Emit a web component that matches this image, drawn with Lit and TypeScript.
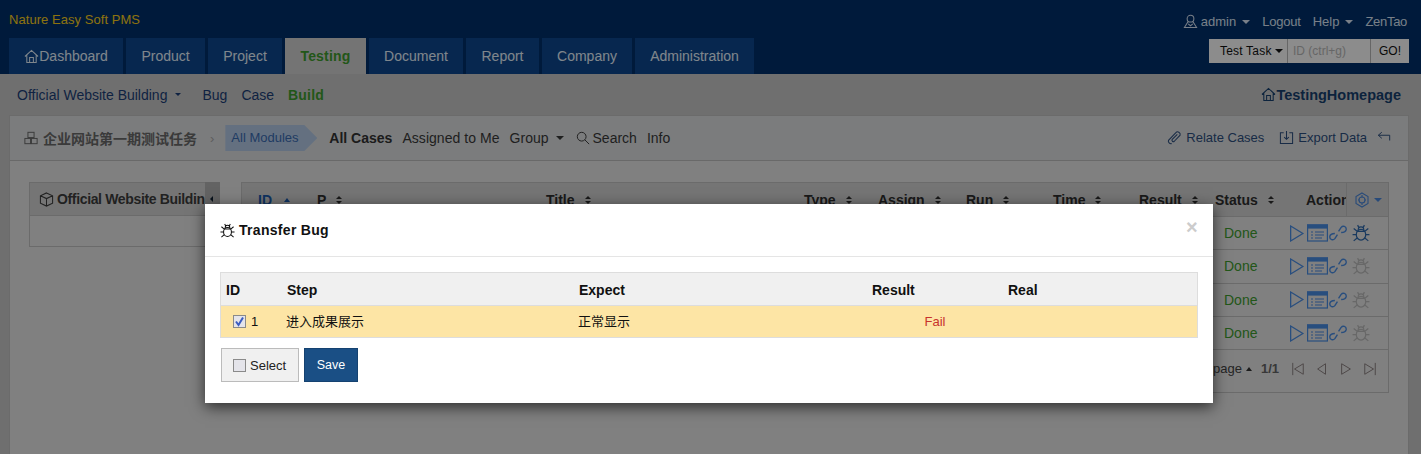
import { LitElement, html, css, svg } from "lit";
import { customElement } from "lit/decorators.js";

const ic = (w: number, body: unknown, cls = "") => html`<svg class="ic ${cls}" width=${w} height=${w} viewBox="0 0 16 16" fill="none" stroke="currentColor" stroke-width="1.1">${body}</svg>`;
const home = (w = 16) => ic(w, svg`<path d="M1 8 8 1.5 15 8M3 6.5V14.5H13V6.5M6 14.5V9H10V14.5"/>`);
const user = () => ic(15, svg`<circle cx="8" cy="5" r="3.6"/><path d="M5.5 8 1.5 14.5H14.5L10.5 8M5.5 10.5 8 12.5 10.5 10.5"/>`);
const sitemap = () => ic(14, svg`<rect x="4.5" y="1.5" width="7" height="6"/><rect x="1" y="8.5" width="6.5" height="6"/><rect x="8.5" y="8.5" width="6.5" height="6"/>`);
const cube = () => ic(15, svg`<path d="M8 1 14.5 4V12L8 15 1.5 12V4ZM1.5 4 8 7 14.5 4M8 7V15"/>`);
const link = () => ic(15, svg`<path d="M5 14.5C3 15.2.8 13 1.6 11L9.5 2.8C11 1 14.8 2.5 14 5.5L7.8 12C6.5 13.2 4.4 11.5 5.6 10L11 4.6"/>`);
const exportI = () => ic(15, svg`<path d="M5 3H1.5V14.5H14.5V3H11M8 1V10M5.5 7.5 8 10 10.5 7.5"/>`);
const back = () => ic(14, svg`<path d="M1.5 6H14.5V12M1.5 6 5.5 2.5M1.5 6 5.5 9.5"/>`);
const search = () => ic(14, svg`<circle cx="6.5" cy="6.5" r="5"/><path d="M10 10 15 15"/>`);
const bug = (w = 18, cls = "") => ic(w, svg`<ellipse cx="8" cy="9.5" rx="4.2" ry="4.8"/><path d="M4.5 6.5H11.5M5.5 5.5C5.5 1.5 10.5 1.5 10.5 5.5M4 9.5H.5M12 9.5H15.5M4.6 6.5 1.5 4M11.4 6.5 14.5 4M4.6 12.5 1.5 15M11.4 12.5 14.5 15M5 1 6 3M11 1 10 3"/>`, cls);
const play = () => ic(17, svg`<path d="M2.5 1 14 8 2.5 15Z" stroke-width="1.2"/>`);
const listBox = () => html`<svg class="ic" width="21" height="18" viewBox="0 0 21 18" fill="none" stroke="currentColor" stroke-width="1.2"><rect x=".6" y="1" width="19.8" height="16"/><rect x=".6" y="1" width="19.8" height="3" fill="currentColor"/><path d="M4 8H6M8 8H17M4 11H6M8 11H17M4 14H6M8 14H15"/></svg>`;
const unlink = () => ic(18, svg`<path stroke-width="1.25" d="M8.5 6.5 10.8 3C12.3 1.2 15.5 1.8 15.3 4.8 15 7 13 7.6 10.8 7.6M7.5 9.5 5.2 13C3.7 14.8.5 14.2.7 11.2 1 9 3 8.4 5.2 8.4"/>`);
const gear = () => ic(16, svg`<path d="M8 1 14 4.5V11.5L8 15 2 11.5V4.5Z"/><circle cx="8" cy="8" r="3"/><path d="M8 5.5V3M8 10.5V13M5.5 8H4M10.5 8H12"/>`);
const pagerIcon = (d: string) => ic(14, svg`<path d=${d}/>`);
const sort = () => html`<span class="sort"></span>`;
const checkbox = (on: boolean) => html`<svg class="cb" width="13" height="13" viewBox="0 0 13 13"><rect x=".5" y=".5" width="12" height="12" fill="#e4e4ea" stroke="#8a8a8a"/>${on ? svg`<path d="M3 6.5 5.5 10 10 2.5" fill="none" stroke="#3b5cc0" stroke-width="2"/>` : ""}</svg>`;

const heads = ["ID", "P", "Title", "Type", "Assign", "Run", "Time", "Result", "Status"];

@customElement("app-root")
export class AppRoot extends LitElement {
  static styles = css`
    :host { display: block; position: relative; height: 454px; overflow: hidden; background: #cbcbcb; font: 14px "Liberation Sans", "Noto Sans CJK SC", sans-serif; color: #3d3d3d; }
    .ic { display: block; flex: none; }
    .caret { display: inline-block; border: 4px solid transparent; border-top-color: currentColor; border-bottom: 0; flex: none; }
    header { height: 74px; background: #00306c; display: flex; flex-direction: column; }
    .top { height: 38px; display: flex; justify-content: space-between; padding: 0 14px 0 9px; font-size: 13px; }
    .brand { color: #ffd21a; padding-top: 12px; letter-spacing: .05px; }
    .usernav { display: flex; gap: 12px; padding-top: 14px; color: #dce8f8; height: 15px; align-items: center; }
    .usernav span { display: flex; align-items: center; gap: 3px; }
    .usernav .caret { margin-left: 3px; }
    .usernav .zt { letter-spacing: -.3px; }
    .usernav .lo { letter-spacing: -.2px; }
    .bottom { flex: 1; display: flex; justify-content: space-between; padding: 0 12px 0 9px; }
    .tabs { display: grid; grid-template-columns: 114px 79px 74px 81px 94px 73px 90px 119px; gap: 3px; }
    .tab { height: 36px; display: flex; align-items: center; justify-content: center; background: #0d4890; color: #e8f4ff; }
    .tab.on { background: #d3d3d3; color: #3f9e2e; font-weight: bold; letter-spacing: .2px; }
    .qs { display: flex; height: 24px; margin-top: 1px; font-size: 12px; color: #111; }
    .qs > * { display: flex; align-items: center; box-sizing: border-box; background: #fff; }
    .qsbtn { width: 78px; padding-left: 11px; gap: 2px; letter-spacing: .2px; }
    .qsbtn .caret { margin-left: 1px; }
    .qsin { width: 84px; padding-left: 5px; color: #bbb; border-left: 1px solid #bbb; border-right: 1px solid #bbb; }
    .qsgo { width: 38px; justify-content: center; }
    .sub { height: 41px; display: flex; align-items: center; justify-content: space-between; padding: 0 20px 0 17px; color: #1c3f78; }
    .subl { display: flex; align-items: center; gap: 14px; }
    .subl .prod { display: flex; align-items: center; gap: 8px; margin-right: 7px; }
    .subl .caret { border-width: 3px; }
    .green { color: #3f9e2e; font-weight: bold; letter-spacing: .2px; }
    .subr { display: flex; align-items: center; font-weight: bold; font-size: 14.5px; color: #17406f; }
    .card { margin: 0 12px 0 9px; background: #e9e9e9; height: 400px; box-sizing: border-box; border: 1px solid #c4c4c4; border-width: 1px 1px 0 1px; display: flex; flex-direction: column; }
    .cardh { height: 44px; flex: none; background: #e0e2e4; border-bottom: 1px solid #bfbfbf; display: flex; justify-content: space-between; align-items: center; padding: 0 13px 0 14px; }
    .crumb { display: flex; align-items: center; }
    .task { display: flex; align-items: center; gap: 5px; font-weight: bold; color: #6a6a6a; margin-right: 13px; font-size: 14px; white-space: nowrap; }
    .chev { color: #aaa; margin-right: 11px; font-size: 13px; }
    .mod { width: 92px; height: 26px; line-height: 26px; background: #b7cdea; color: #3a6cb4; box-sizing: border-box; padding-left: 6px; font-size: 13px; clip-path: polygon(0 0, 79px 0, 100% 50%, 79px 100%, 0 100%); margin-right: 12px; }
    .flt { display: flex; align-items: center; gap: 10px; color: #3a3a3a; }
    .flt b { color: #333; }
    .flt span { display: flex; align-items: center; gap: 3px; }
    .flt .am { letter-spacing: .05px; }
    .flt .caret { margin: 0 2px 0 4px; }
    .acts { display: flex; align-items: center; font-size: 13px; color: #2d4f80; margin-top: -2px; }
    .acts .ic { margin-right: 4px; }
    .act-item { display: flex; align-items: center; margin-right: 15px; }
    .act-item.last { margin-right: 10px; }
    .cardb { display: flex; padding: 21px 19px 0; gap: 21px; align-items: flex-start; }
    .side { width: 191px; height: 65px; box-sizing: border-box; border: 1px solid #c4c4c4; flex: none; position: relative; }
    .sideh { height: 32px; background: #d6d6d6; border-bottom: 1px solid #c4c4c4; display: flex; align-items: center; gap: 3px; padding-left: 9px; font-weight: bold; white-space: nowrap; overflow: hidden; color: #3d3d3d; letter-spacing: -.35px; }
    .sidetog { position: absolute; right: -1px; top: -1px; width: 15px; height: 34px; background: #b4b4b4; }
    .sidetog::after { content: ""; position: absolute; left: 5px; top: 14px; border: 3px solid transparent; border-right-color: #123; border-left: 0; }
    .grid { flex: 1; box-sizing: border-box; border: 1px solid #c4c4c4; }
    .cols { display: grid; grid-template-columns: 59px 229px 258px 74px 88px 87px 86px 76px 91px 56px 42px; }
    .rowh { height: 33px; background: #d6d6d6; border-bottom: 1px solid #c4c4c4; font-weight: bold; color: #2f2f2f; align-items: center; }
    .rowh > div { padding-left: 16px; white-space: nowrap; display: flex; align-items: center; gap: 10px; overflow: hidden; }
    .sort { display: inline-block; width: 0; height: 0; border: 3px solid transparent; border-bottom: 3px solid #2f2f2f; position: relative; top: -4px; }
    .sort::after { content: ""; position: absolute; left: -3px; top: 5px; border: 3px solid transparent; border-top: 3px solid #2f2f2f; }
    .rowh .idc { color: #1b5cb0; gap: 12px; }
    .asc { display: inline-block; border: 3px solid transparent; border-bottom: 4px solid #1b5cb0; border-top: 0; }
    .rowh .gearc { padding: 0; justify-content: center; height: 33px; border-left: 1px solid #c4c4c4; box-sizing: border-box; color: #4a88dc; gap: 4px; }
    .row { height: 32.33px; border-bottom: 1px solid #c4c4c4; display: flex; justify-content: flex-end; align-items: center; }
    .done { color: #3f9e2e; width: 64px; }
    .ricons { display: flex; align-items: center; color: #4a8ee6; width: 100px; }
    .ricons .ic:nth-child(2) { margin-left: 2px; }
    .ricons .ic:nth-child(3) { margin-left: 1px; }
    .ricons .dim { color: #bdbdbd; margin-left: 5px; }
    .ricons .act { color: #2f6aae; margin-left: 5px; }
    .pager { height: 37px; padding-bottom: 5px; display: flex; justify-content: flex-end; align-items: center; color: #444; padding-right: 1px; font-size: 13px; }
    .pg { display: flex; align-items: center; gap: 4px; margin-right: 9px; }
    .up { border: 3px solid transparent; border-bottom: 4px solid #333; border-top: 0; }
    .pager b { color: #666; margin-right: 12px; }
    .pager .ic { margin-right: 10px; color: #8a8080; }
    .backdrop { position: absolute; inset: 0; background: rgba(0,0,0,.45); }
    .modal { position: absolute; left: 205px; top: 204px; width: 1008px; height: 199px; background: #fff; box-shadow: 0 4px 14px rgba(0,0,0,.65); box-sizing: border-box; }
    .mh { height: 52px; border-bottom: 1px solid #e5e5e5; display: flex; align-items: center; padding-left: 15px; gap: 4px; font-weight: bold; color: #111; position: relative; letter-spacing: .3px; }
    .x { position: absolute; right: 15px; top: 13px; font-size: 20px; color: #ccc; font-weight: bold; line-height: 20px; }
    .mb { padding: 15px 15px 0; }
    .mt { border: 1px solid #ddd; font-size: 13px; color: #111; }
    .mcols { display: grid; grid-template-columns: 61px 292px 293px 136px 1fr; align-items: center; }
    .mth { height: 32px; background: #f0f0f0; font-weight: bold; font-size: 14px; border-bottom: 1px solid #ddd; }
    .mth div { padding: 1px 0 0 5px; }
    .mtr { height: 31px; background: #fde5a5; }
    .mtr > div { padding-left: 5px; display: flex; align-items: center; }
    .mtr .step { padding: 0 0 2px 4px; }
    .mtr .idd { padding-left: 12px; gap: 5px; }
    .mtr .fail { justify-content: center; color: #c8322c; padding-right: 5px; font-size: 13px; }
    .mf { display: flex; gap: 5px; margin-top: 10px; padding-left: 1px; }
    .sel { width: 78px; height: 34px; box-sizing: border-box; background: #f0f0f0; border: 1px solid #bbb; display: flex; align-items: center; padding-left: 11px; gap: 4px; font-size: 13px; color: #222; }
    .save { width: 54px; height: 34px; box-sizing: border-box; background: #1a4f85; border: 1px solid #154270; color: #fff; display: flex; align-items: center; justify-content: center; font-size: 12.5px; }
  `;

  render() {
    return html`
      <header>
        <div class="top">
          <div class="brand">Nature Easy Soft PMS</div>
          <div class="usernav">
            <span>${user()} admin <i class="caret"></i></span>
            <span class="lo">Logout</span>
            <span>Help <i class="caret"></i></span>
            <span class="zt">ZenTao</span>
          </div>
        </div>
        <div class="bottom">
          <nav class="tabs">
            <div class="tab">${home(15)}Dashboard</div>
            <div class="tab">Product</div>
            <div class="tab">Project</div>
            <div class="tab on">Testing</div>
            ${["Document", "Report", "Company", "Administration"].map((t) => html`<div class="tab">${t}</div>`)}
          </nav>
          <div class="qs">
            <div class="qsbtn">Test Task<i class="caret"></i></div>
            <div class="qsin">ID (ctrl+g)</div>
            <div class="qsgo">GO!</div>
          </div>
        </div>
      </header>
      <div class="sub">
        <div class="subl">
          <span class="prod">Official Website Building <i class="caret"></i></span>
          <span>Bug</span><span>Case</span><span class="green">Build</span>
        </div>
        <div class="subr">${home(15)}TestingHomepage</div>
      </div>
      <section class="card">
        <div class="cardh">
          <div class="crumb">
            <span class="task">${sitemap()} 企业网站第一期测试任务</span>
            <span class="chev">›</span>
            <span class="mod">All Modules</span>
            <div class="flt">
              <b>All Cases</b><span class="am">Assigned to Me</span><span>Group <i class="caret"></i></span>
              <span>${search()}Search</span><span>Info</span>
            </div>
          </div>
          <div class="acts">
            <span class="act-item">${link()}Relate Cases</span>
            <span class="act-item last">${exportI()}Export Data</span>
            ${back()}
          </div>
        </div>
        <div class="cardb">
          <aside class="side">
            <div class="sideh">${cube()} Official Website Building</div>
            <div class="sidetog"></div>
          </aside>
          <div class="grid">
            <div class="cols rowh">
              ${heads.map((h, i) => i === 0
                ? html`<div class="idc">${h} <i class="asc"></i></div>`
                : html`<div>${h} ${sort()}</div>`)}
              <div>Action</div>
              <div class="gearc">${gear()}<i class="caret"></i></div>
            </div>
            ${[0, 1, 2, 3].map((i) => html`
              <div class="row">
                <span class="done">Done</span>
                <div class="ricons">${play()}${listBox()}${unlink()}${bug(18, i === 0 ? "act" : "dim")}</div>
              </div>`)}
            <div class="pager">
              <span class="pg">page <i class="up"></i></span>
              <b>1/1</b>
              ${pagerIcon("M2 1V15M14 2V14L4 8Z")}${pagerIcon("M12 2V14L3 8Z")}${pagerIcon("M3 2V14L13 8Z")}${pagerIcon("M14 1V15M2 2V14L12 8Z")}
            </div>
          </div>
        </div>
      </section>
      <div class="backdrop"></div>
      <div class="modal" role="dialog">
        <div class="mh">${bug(15)}<span>Transfer Bug</span><span class="x">×</span></div>
        <div class="mb">
          <div class="mt">
            <div class="mcols mth"><div>ID</div><div>Step</div><div>Expect</div><div>Result</div><div>Real</div></div>
            <div class="mcols mtr">
              <div class="idd">${checkbox(true)}1</div>
              <div class="step">进入成果展示</div>
              <div class="step">正常显示</div>
              <div class="fail">Fail</div>
              <div></div>
            </div>
          </div>
          <div class="mf">
            <div class="sel">${checkbox(false)}Select</div>
            <div class="save">Save</div>
          </div>
        </div>
      </div>
    `;
  }
}
